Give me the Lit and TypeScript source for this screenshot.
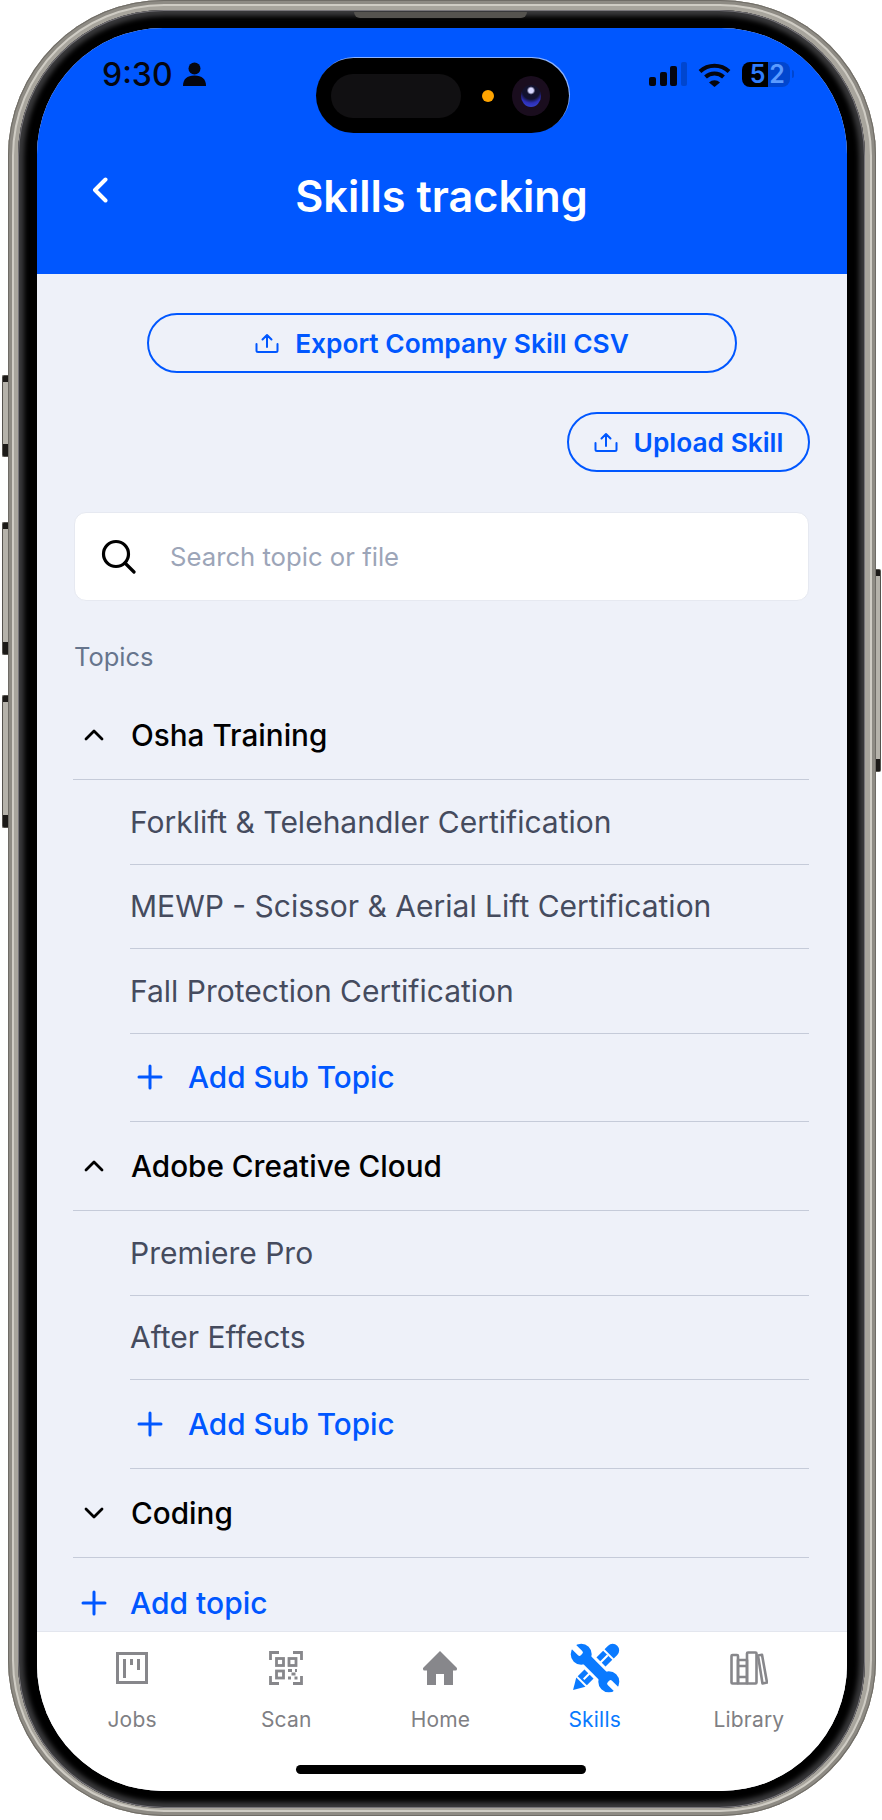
import { LitElement, css, html, svg } from 'lit';
import { customElement } from 'lit/decorators.js';

const uploadIcon = html`<svg class="up" viewBox="0 0 24 20" fill="none" stroke="currentColor" stroke-width="2" stroke-linecap="round" stroke-linejoin="round"><path d="M12 14V2M7.5 6.5 12 2l4.500 4.500M1.500 11v6.500a1.500 1.500 0 0 0 1.500 1.500h18a1.500 1.500 0 0 0 1.500-1.500V11"/></svg>`;
const plusIcon = html`<svg class="plus" viewBox="0 0 26 26" fill="none" stroke="currentColor" stroke-width="3" stroke-linecap="round"><path d="M13 2v22M2 13h22"/></svg>`;
const chevUp = svg`<path d="M2 11 10 3l8 8"/>`;
const chevDown = svg`<path d="M2 3l8 8 8-8"/>`;

const navIcons: Record<string, unknown> = {
  jobs: html`<svg style="width:32px;height:32px" viewBox="0 0 32 32" fill="none" stroke="#87878b" stroke-width="3"><rect x="1.500" y="1.500" width="29" height="29"/><path d="M8.500 7v19M15.500 7v6M22.500 7v11"/></svg>`,
  scan: html`<svg style="width:34px;height:34px" viewBox="0 0 34 34" fill="none" stroke="#87878b" stroke-width="2.800"><path d="M1.500 9V1.500H10M24 1.500h8.500V9M1.500 25v7.500H10M24 32.500h8.500V25"/><rect x="7.500" y="7.500" width="7" height="7"/><rect x="20" y="7.500" width="7" height="7"/><rect x="7.500" y="20" width="7" height="7"/><path d="M19 19.500h4M26 19.500h2M22.500 23h4M25.500 27h3M19 27h3"/></svg>`,
  home: html`<svg style="width:36px;height:34px" viewBox="0 0 36 34" fill="#87878b"><path d="M18 0 34.500 16.500a1.500 1.500 0 0 1 .5 1.500 1.500 1.500 0 0 1-1.500 1.500H31V34H22V23h-8v11H5V19.500H2.500A1.500 1.500 0 0 1 1 18a1.500 1.500 0 0 1 .5-1.500Z"/></svg>`,
  skills: html`<svg style="width:48px;height:48px;overflow:visible" viewBox="0 0 48 48">
    <g transform="rotate(-45 24 24)" fill="#0a7aff">
      <path d="M-7 24 4 17.500v13Z"/>
      <rect x="6" y="17.500" width="36" height="13"/>
      <rect x="8" y="23" width="34" height="2" fill="#fff"/>
      <path d="M44 17.500h5a6.500 6.500 0 0 1 0 13h-5Z"/>
      <rect x="15.500" y="10" width="17" height="28" fill="#fff"/>
      <circle cx="24" cy="4.500" r="10.500"/>
      <circle cx="24" cy="43.500" r="10.500"/>
      <rect x="18.500" y="8" width="11" height="32"/>
      <rect x="21" y="-8" width="6" height="13" rx="2" fill="#fff"/>
      <rect x="21" y="43" width="6" height="13" rx="2" fill="#fff"/>
    </g></svg>`,
  library: html`<svg style="width:38px;height:34px" viewBox="0 0 38 34" fill="none" stroke="#87878b" stroke-width="2.600" stroke-linejoin="round"><rect x="1.500" y="4" width="6.500" height="28.500" rx="1"/><rect x="8" y="9" width="9" height="23.500"/><rect x="17" y="1.500" width="9.500" height="31" rx="1"/><path d="M8 15h9M8 26h9"/><path d="M28 4.500 32 3.800 37 31.500 32.500 32.500Z"/></svg>`,
};

type Topic = { name: string; open: boolean; subs: string[] };

const topics: Topic[] = [
  { name: 'Osha Training', open: true, subs: ['Forklift & Telehandler Certification', 'MEWP - Scissor & Aerial Lift Certification', 'Fall Protection Certification'] },
  { name: 'Adobe Creative Cloud', open: true, subs: ['Premiere Pro', 'After Effects'] },
  { name: 'Coding', open: false, subs: [] },
];

const tabs = [
  { key: 'jobs', label: 'Jobs' },
  { key: 'scan', label: 'Scan' },
  { key: 'home', label: 'Home' },
  { key: 'skills', label: 'Skills', active: true },
  { key: 'library', label: 'Library' },
];

@customElement('app-root')
export class AppRoot extends LitElement {
  static override styles = css`
    :host {
      display: block;
      width: 882px;
      height: 1820px;
      background: #fff;
      overflow: hidden;
      font-family: 'Inter', 'Liberation Sans', sans-serif;
    }
    .phone {
      position: relative;
      box-sizing: border-box;
      margin-left: 8px;
      width: 868px;
      height: 1816px;
      padding: 10px 11px 8px 10px;
      border-radius: 156px;
      background: #a8a59d;
      box-shadow: inset 0 0 0 1px #6f6c66, inset 0 0 0 4px #8e8b84, inset 0 0 0 6px #cfccc4;
    }
    .btn {
      position: absolute;
      left: -6px;
      width: 6px;
      box-sizing: border-box;
      background: linear-gradient(#1c1a18 0 6px, #b5b2aa 6px calc(100% - 12px), #1c1a18 calc(100% - 12px));
      border: 1px solid #55524d;
      border-right: 0;
      border-radius: 2px 0 0 2px;
    }
    .b1 { top: 375px; height: 82px; }
    .b2 { top: 522px; height: 133px; }
    .b3 { top: 695px; height: 133px; }
    .b4 { top: 569px; height: 203px; left: auto; right: -5px; width: 5px; border-right: 1px solid #55524d; border-left: 0; border-radius: 0 2px 2px 0; }
    .speaker {
      position: absolute;
      top: 12px;
      left: 346px;
      width: 173px;
      height: 6px;
      background: #55534f;
      border-radius: 0 0 6px 6px;
    }
    .rim {
      box-sizing: border-box;
      height: 100%;
      padding: 18px 18px 17px 19px;
      border-radius: 146px;
      background: #000;
      box-shadow: inset 0 0 0 1px #77757a, inset 0 0 5px 6px #3a3a3c;
    }
    .screen {
      position: relative;
      height: 100%;
      border-radius: 126px;
      overflow: hidden;
      display: flex;
      flex-direction: column;
      background: #eef1f9;
    }
    .head {
      flex: none;
      height: 246px;
      background: #0057ff;
      box-sizing: border-box;
    }
    .status {
      display: flex;
      justify-content: space-between;
      padding: 30px 53px 0 65px;
      height: 32px;
      align-items: center;
    }
    .time { display: flex; align-items: center; gap: 10px; font-size: 32px; font-weight: 500; color: #05060f; letter-spacing: 0; }
    .person { width: 23px; height: 24px; }
    .sys { display: flex; align-items: center; }
    .signal { width: 38px; height: 24px; margin-right: 11px; }
    .wifi { width: 33px; height: 25px; margin-right: 11px; }
    .batt { display: flex; width: 48px; height: 25px; font-size: 25px; font-weight: 600; line-height: 25px; text-align: center; }
    .batt span { display: block; height: 25px; box-sizing: border-box; }
    .batt .on { width: 26px; background: #000; color: #2f7dff; padding-left: 5px; border-radius: 8px 0 0 8px; }
    .batt .off { width: 22px; background: #0046cf; color: #5b9bff; padding-right: 4px; border-radius: 0 8px 8px 0; }
    .nub { width: 2px; height: 8px; background: #0046cf; margin-left: 2px; border-radius: 0 2px 2px 0; }
    .island {
      position: absolute;
      top: 30px;
      left: 279px;
      width: 253px;
      height: 75px;
      box-sizing: border-box;
      display: flex;
      align-items: center;
      padding-left: 15px;
      background: #000;
      border-radius: 38px;
      box-shadow: 1px -1px 0 rgba(255, 255, 255, 0.55);
    }
    .pill { width: 130px; height: 44px; border-radius: 22px; background: #111012; margin-right: 21px; }
    .dot { width: 12px; height: 12px; border-radius: 50%; background: #ffa400; margin-right: 18px; }
    .cam { position: relative; width: 38px; height: 40px; border-radius: 50%; background: #1a0d1e; display: flex; align-items: center; justify-content: center; }
    .lens { width: 20px; height: 22px; border-radius: 50%; background: radial-gradient(circle at 50% 25%, #d8d8ff 0 12%, #12122e 22% 45%, #2d2fb8 65%, #3a4cd0 100%); }
    .title-row {
      position: relative;
      display: flex;
      justify-content: center;
      align-items: center;
      margin-top: 76px;
      height: 60px;
      padding-right: 1px;
    }
    .back { position: absolute; left: 54px; top: 11px; width: 17px; height: 26px; }
    h1 { margin: 0; font-size: 43.200px; font-weight: 600; color: #fff; line-height: 60px; }
    .main { flex: 1; min-height: 0; overflow: hidden; box-sizing: border-box; padding: 39px 38px 0 36px; }
    .pill-btn {
      display: flex;
      align-items: center;
      justify-content: center;
      box-sizing: border-box;
      height: 60px;
      border: 2px solid #0057ff;
      border-radius: 30px;
      color: #0057ff;
      font-size: 26.300px;
      font-weight: 600;
      gap: 16px;
    }
    .up { width: 24px; height: 20px; flex: none; }
    .export { width: 590px; margin-left: 74px; }
    .upload { width: 243px; margin: 39px -1px 0 auto; }
    .search {
      display: flex;
      align-items: center;
      box-sizing: border-box;
      height: 89px;
      margin: 40px 0 0 1px;
      padding-left: 26px;
      background: #fff;
      border: 1px solid #e6e9f1;
      border-radius: 12px;
      font-size: 25.700px;
      color: #9ca5b8;
    }
    .search svg { width: 35px; height: 35px; margin-right: 34px; }
    .topics-label { margin: 40px 0 19px 1px; line-height: 31px; font-size: 25.500px; color: #66758d; }
    .row { display: flex; align-items: center; box-sizing: border-box; border-bottom: 1px solid #c5cbd9; }
    .topic { height: 89px; font-size: 29.700px; font-weight: 500; color: #000; }
    .chev { width: 20px; height: 14px; flex: none; margin: 0 27px 0 11px; fill: none; stroke: #000; stroke-width: 2.800; stroke-linecap: round; stroke-linejoin: round; }
    .sub { height: 84.500px; margin-left: 57px; font-size: 30px; color: #454b5e; }
    .add { height: 88.500px; margin-left: 57px; font-size: 29.700px; font-weight: 500; color: #0057ff; }
    .plus { width: 26px; height: 26px; flex: none; margin: 0 25px 0 7px; }
    .add-topic { height: 90px; border: 0; margin-left: 8px; font-size: 30px; }
    .add-topic .plus { margin: 0 23px 0 0; }
    .nav {
      flex: none;
      position: relative;
      height: 160px;
      box-sizing: border-box;
      background: #fff;
      border-top: 1px solid #e3e6ee;
      padding: 0 21px 0 18px;
      display: grid;
      grid-template-columns: repeat(5, 1fr);
    }
    .tab { display: flex; flex-direction: column; align-items: center; font-size: 21px; color: #7f7f84; }
    .tab.on { color: #0a7aff; }
    .ico { height: 48px; margin-top: 12px; display: flex; align-items: center; justify-content: center; }
    .tab span { margin-top: 15px; line-height: 26px; letter-spacing: 0.2px; }
    .indicator { position: absolute; left: 259px; bottom: 17px; width: 290px; height: 9px; border-radius: 5px; background: #000; }
  `;

  private renderTopic(t: Topic) {
    return html`
      <div class="row topic">
        <svg class="chev" viewBox="0 0 20 14">${t.open ? chevUp : chevDown}</svg>
        ${t.name}
      </div>
      ${t.subs.map((s) => html`<div class="row sub">${s}</div>`)}
      ${t.open ? html`<div class="row add">${plusIcon}Add Sub Topic</div>` : ''}
    `;
  }

  override render() {
    return html`
      <div class="phone">
        <i class="btn b1"></i><i class="btn b2"></i><i class="btn b3"></i><i class="btn b4"></i>
        <div class="rim">
          <div class="screen">
            <div class="head">
              <div class="status">
                <div class="time">9:30
                  <svg class="person" viewBox="0 0 23 24" fill="#05060f"><circle cx="11.500" cy="6.500" r="6"/><path d="M0 24c0-7 4-10.500 11.500-10.500S23 17 23 24Z"/></svg>
                </div>
                <div class="sys">
                  <svg class="signal" viewBox="0 0 38 24"><g fill="#05060f"><rect y="15" width="7" height="9" rx="2"/><rect x="11" y="10" width="7" height="14" rx="2"/><rect x="21" y="4" width="7" height="20" rx="2"/></g><rect x="32" width="6" height="24" rx="2" fill="#0046cf"/></svg>
                  <svg class="wifi" viewBox="0 0 33 25" fill="none" stroke="#05060f" stroke-width="4"><path d="M2 9.500a21 21 0 0 1 29 0M7.500 15a13 13 0 0 1 18 0"/><path d="M11 20.500 16.500 25 22 20.500a8 8 0 0 0-11 0Z" fill="#05060f" stroke="none"/></svg>
                  <div class="batt"><span class="on">5</span><span class="off">2</span></div>
                  <div class="nub"></div>
                </div>
              </div>
              <div class="island">
                <div class="pill"></div><div class="dot"></div>
                <div class="cam"><div class="lens"></div></div>
              </div>
              <div class="title-row">
                <svg class="back" viewBox="0 0 17 26" fill="none" stroke="#fff" stroke-width="4" stroke-linecap="round" stroke-linejoin="round"><path d="M14.500 2.500 4 13l10.500 10.500"/></svg>
                <h1>Skills tracking</h1>
              </div>
            </div>
            <div class="main">
              <div class="pill-btn export">${uploadIcon}Export Company Skill CSV</div>
              <div class="pill-btn upload">${uploadIcon}Upload Skill</div>
              <div class="search">
                <svg viewBox="0 0 35 35" fill="none" stroke="#000" stroke-width="3.200" stroke-linecap="round"><circle cx="15" cy="15" r="12.500"/><path d="m24 24 9 9"/></svg>
                Search topic or file
              </div>
              <div class="topics-label">Topics</div>
              ${topics.map((t) => this.renderTopic(t))}
              <div class="row add add-topic">${plusIcon}Add topic</div>
            </div>
            <div class="nav">
              ${tabs.map((t) => html`
                <div class="tab ${t.active ? 'on' : ''}">
                  <div class="ico">${navIcons[t.key]}</div>
                  <span>${t.label}</span>
                </div>`)}
              <div class="indicator"></div>
            </div>
          </div>
        </div>
        <div class="speaker"></div>
      </div>
    `;
  }
}
